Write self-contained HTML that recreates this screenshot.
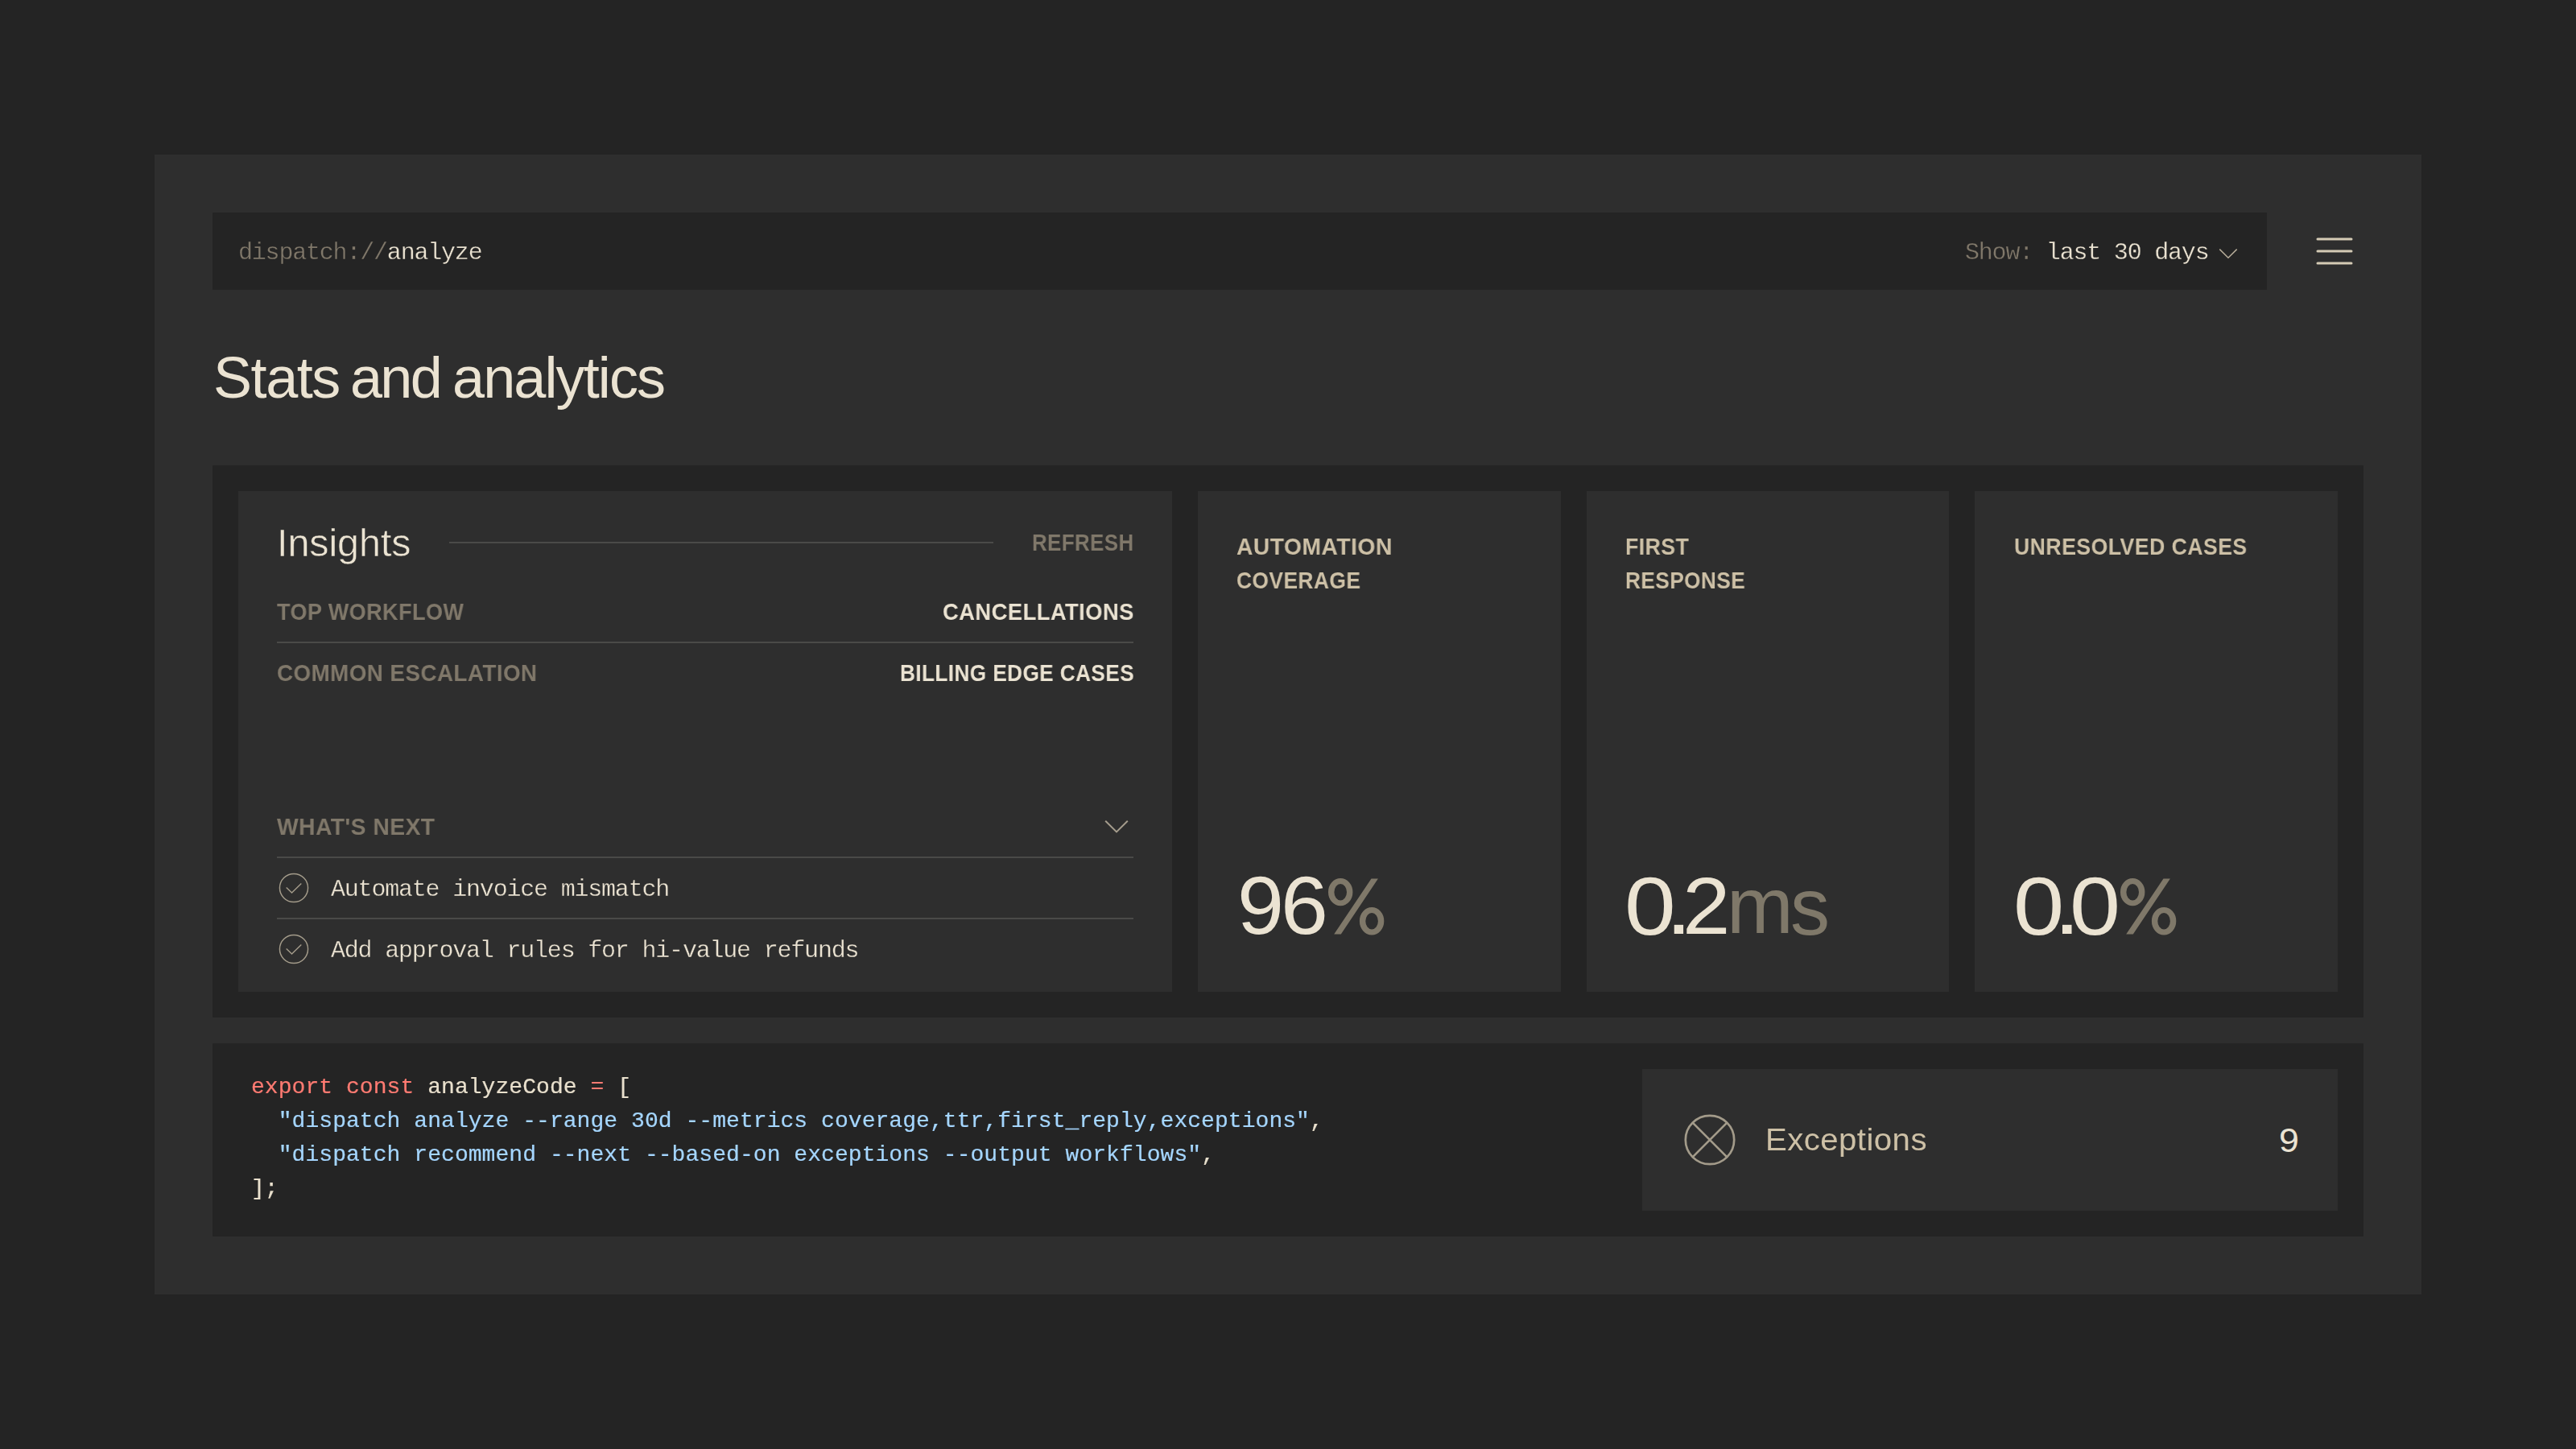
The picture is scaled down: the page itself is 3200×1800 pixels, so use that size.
<!DOCTYPE html>
<html lang="en">
<head>
<meta charset="utf-8">
<title>Stats and analytics</title>
<style>
*{box-sizing:border-box;margin:0;padding:0}
html,body{width:3200px;height:1800px;background:#242424;overflow:hidden}
body{position:relative;font-family:"Liberation Sans",sans-serif;color:#ebe3d2;-webkit-font-smoothing:antialiased}
.abs{position:absolute}
.t{position:absolute;white-space:nowrap;line-height:1;will-change:transform;transform-origin:0 0}
.mono{font-family:"Liberation Mono",monospace;font-size:30px;letter-spacing:-1.2px}
.code{font-family:"Liberation Mono",monospace;font-size:28px}
.shell{left:192px;top:192px;width:2816px;height:1416px;background:#2e2e2e}
.dark{background:#242424}
.card{background:#2e2e2e}
.lbl{font-weight:700;font-size:29.5px;letter-spacing:0}
.muted{color:#80786a}
.beige{color:#cdc0a6}
.cream{color:#ebe3d2}
.hr{position:absolute;height:2px;background:#4a4a48}
.big{font-size:96px;letter-spacing:-4px}
.g{position:absolute;font-size:96px;line-height:1;white-space:nowrap;transform-origin:0 0}
</style>
</head>
<body>
<div class="abs shell"></div>

<!-- top bar -->
<div class="abs dark" style="left:264px;top:264px;width:2552px;height:96px"></div>
<div class="t mono" id="url" style="left:295.6px;top:299.2px;-webkit-text-stroke:0.3px #242424"><span class="muted">dispatch://</span><span class="cream">analyze</span></div>
<div class="t mono" id="show" style="left:2441px;top:299px;-webkit-text-stroke:0.3px #242424"><span class="muted">Show: </span><span class="cream">last 30 days</span></div>
<svg class="abs" id="chev1" style="left:2750px;top:300px" width="40" height="30" viewBox="0 0 40 30"><path d="M7.3 9.6 L18 20.2 L28.7 9.6" fill="none" stroke="#b5ab98" stroke-width="1.5"/></svg>
<!-- hamburger -->
<svg class="abs" id="ham" style="left:2870px;top:288px" width="60" height="48" viewBox="0 0 60 48"><path d="M9 9 H51 M9 24 H51 M9 39 H51" fill="none" stroke="#d5cbb5" stroke-width="3" stroke-linecap="round"/></svg>

<!-- title -->
<div class="t cream" id="t1" style="left:264.6px;top:432.6px;font-size:72px;letter-spacing:-1.45px">Stats</div>
<div class="t cream" id="t2" style="left:434.6px;top:432.6px;font-size:72px;letter-spacing:-2.70px">and</div>
<div class="t cream" id="t3" style="left:561.8px;top:432.6px;font-size:72px;letter-spacing:-1.88px">analytics</div>

<!-- main panel -->
<div class="abs dark" style="left:264px;top:578px;width:2672px;height:686px"></div>
<div class="abs card" style="left:296px;top:610px;width:1160px;height:622px"></div>
<div class="abs card" style="left:1488px;top:610px;width:451px;height:622px"></div>
<div class="abs card" style="left:1971px;top:610px;width:450px;height:622px"></div>
<div class="abs card" style="left:2453px;top:610px;width:451px;height:622px"></div>

<!-- insights -->
<div class="t cream" id="ins" style="left:343.8px;top:650.2px;font-size:48.5px;letter-spacing:-0.09px;-webkit-text-stroke:0.5px #2e2e2e">Insights</div>
<div class="hr" style="left:558px;top:673px;width:676px"></div>
<div class="t lbl muted" id="refresh" style="left:1281.8px;top:659.0px;letter-spacing:0.50px;transform:scaleX(0.8757)">REFRESH</div>

<div class="t lbl muted" id="tw" style="left:344.2px;top:744.8px;letter-spacing:0.50px;transform:scaleX(0.9145)">TOP WORKFLOW</div>
<div class="t lbl cream" id="canc" style="left:1170.5px;top:745.0px;letter-spacing:0.50px;transform:scaleX(0.9265)">CANCELLATIONS</div>
<div class="hr" style="left:344px;top:797px;width:1064px"></div>
<div class="t lbl muted" id="ce" style="left:344.2px;top:821.0px;letter-spacing:0.50px;transform:scaleX(0.9407)">COMMON ESCALATION</div>
<div class="t lbl cream" id="bec" style="left:1117.6px;top:821.0px;letter-spacing:0.50px;transform:scaleX(0.8856)">BILLING EDGE CASES</div>

<div class="t lbl muted" id="wn" style="left:344.2px;top:1011.8px;letter-spacing:0.50px;transform:scaleX(0.9570)">WHAT'S NEXT</div>
<svg class="abs" id="chev2" style="left:1366px;top:1010px" width="44" height="34" viewBox="0 0 44 34"><path d="M7.2 9.7 L21 23.4 L34.8 9.7" fill="none" stroke="#a69e8e" stroke-width="2"/></svg>
<div class="hr" style="left:344px;top:1064px;width:1064px"></div>

<svg class="abs" id="chk1" style="left:344px;top:1082px" width="42" height="42" viewBox="0 0 42 42"><circle cx="21" cy="21" r="17.55" fill="none" stroke="#a39b8a" stroke-width="1.45"/><path d="M11.7 20.4 L18.5 26.9 L30.3 15.4" fill="none" stroke="#a39b8a" stroke-width="1.45"/></svg>
<div class="t mono cream" id="a1" style="left:411px;top:1090.1px;-webkit-text-stroke:0.3px #2e2e2e">Automate invoice mismatch</div>
<div class="hr" style="left:344px;top:1140px;width:1064px"></div>
<svg class="abs" id="chk2" style="left:344px;top:1158px" width="42" height="42" viewBox="0 0 42 42"><circle cx="21" cy="21" r="17.55" fill="none" stroke="#a39b8a" stroke-width="1.45"/><path d="M11.7 20.4 L18.5 26.9 L30.3 15.4" fill="none" stroke="#a39b8a" stroke-width="1.45"/></svg>
<div class="t mono cream" id="a2" style="left:411px;top:1166px;-webkit-text-stroke:0.3px #2e2e2e">Add approval rules for hi-value refunds</div>

<!-- stat cards -->
<div class="t lbl beige" id="s1a" style="left:1536.0px;top:664.0px;letter-spacing:0.50px;transform:scaleX(0.9581)">AUTOMATION</div>
<div class="t lbl beige" id="s1b" style="left:1536.0px;top:706.0px;letter-spacing:0.50px;transform:scaleX(0.8928)">COVERAGE</div>
<div class="t lbl beige" id="s2a" style="left:2018.8px;top:664.0px;letter-spacing:0.50px;transform:scaleX(0.9032)">FIRST</div>
<div class="t lbl beige" id="s2b" style="left:2018.8px;top:706.0px;letter-spacing:0.50px;transform:scaleX(0.8883)">RESPONSE</div>
<div class="t lbl beige" id="s3a" style="left:2501.8px;top:664.0px;letter-spacing:0.50px;transform:scaleX(0.9036)">UNRESOLVED CASES</div>


<!--BIG-->
<div class="g" style="left:1536.71px;top:1074.33px;transform:scale(1.0870,1.0647);color:#ebe3d2">9</div>
<div class="g" style="left:1590.96px;top:1074.33px;transform:scale(1.1034,1.0647);color:#ebe3d2">6</div>
<svg class="abs" style="left:1650.0px;top:1090.7px" width="70" height="71" viewBox="0 0 70 71"><path d="M0.00 17.15a15.20 17.15 0 1 0 30.40 0a15.20 17.15 0 1 0 -30.40 0ZM7.40 17.15a7.80 10.25 0 1 0 15.60 0a7.80 10.25 0 1 0 -15.60 0ZM38.90 53.25a15.20 17.15 0 1 0 30.40 0a15.20 17.15 0 1 0 -30.40 0ZM46.30 53.25a7.80 10.25 0 1 0 15.60 0a7.80 10.25 0 1 0 -15.60 0ZM53.5 0.5H61.9L15.8 69.5H7.2Z" fill="#7f7869" fill-rule="evenodd"/></svg>
<div class="g" style="left:2018.42px;top:1074.55px;transform:scale(1.1935,1.0632);color:#ebe3d2">0</div>
<div class="g" style="left:2068.82px;top:1072.80px;transform:scale(1.2324,1.0732);color:#ebe3d2">.</div>
<div class="g" style="left:2090.41px;top:1074.75px;transform:scale(1.1131,1.0493);color:#ebe3d2">2</div>
<div class="g" style="left:2144.97px;top:1077.42px;transform:scale(1.0349,1.0164);color:#7f7869">m</div>
<div class="g" style="left:2223.69px;top:1075.75px;transform:scale(1.0228,1.0438);color:#7f7869">s</div>
<div class="g" style="left:2501.46px;top:1074.55px;transform:scale(1.1848,1.0632);color:#ebe3d2">0</div>
<div class="g" style="left:2551.13px;top:1072.80px;transform:scale(1.2541,1.0732);color:#ebe3d2">.</div>
<div class="g" style="left:2570.87px;top:1074.55px;transform:scale(1.1804,1.0632);color:#ebe3d2">0</div>
<svg class="abs" style="left:2633.7px;top:1090.7px" width="70" height="71" viewBox="0 0 70 71"><path d="M0.00 17.15a15.20 17.15 0 1 0 30.40 0a15.20 17.15 0 1 0 -30.40 0ZM7.40 17.15a7.80 10.25 0 1 0 15.60 0a7.80 10.25 0 1 0 -15.60 0ZM38.90 53.25a15.20 17.15 0 1 0 30.40 0a15.20 17.15 0 1 0 -30.40 0ZM46.30 53.25a7.80 10.25 0 1 0 15.60 0a7.80 10.25 0 1 0 -15.60 0ZM53.5 0.5H61.9L15.8 69.5H7.2Z" fill="#7f7869" fill-rule="evenodd"/></svg>
<!--/BIG-->

<!-- code panel -->
<div class="abs dark" style="left:264px;top:1296px;width:2672px;height:240px"></div>
<pre class="abs code" id="code" style="will-change:transform;-webkit-text-stroke:0.2px;left:311.7px;top:1329.5px;line-height:42px;letter-spacing:0.056px;color:#e9e0cd"><span style="color:#ff7b72">export</span> <span style="color:#ff7b72">const</span> analyzeCode <span style="color:#ff7b72">=</span> [
  <span style="color:#a5d6ff">"dispatch analyze --range 30d --metrics coverage,ttr,first_reply,exceptions"</span>,
  <span style="color:#a5d6ff">"dispatch recommend --next --based-on exceptions --output workflows"</span>,
];</pre>

<!-- exceptions -->
<div class="abs card" style="left:2040px;top:1328px;width:864px;height:176px"></div>
<svg class="abs" id="xic" style="left:2088px;top:1380px" width="72" height="72" viewBox="0 0 72 72"><circle cx="36" cy="36" r="30.2" fill="none" stroke="#a39b8a" stroke-width="2.7"/><path d="M14.65 14.65 L57.35 57.35 M57.35 14.65 L14.65 57.35" fill="none" stroke="#a39b8a" stroke-width="2.7"/></svg>
<div class="t beige" id="exc" style="left:2192.6px;top:1397.0px;font-size:38.5px;letter-spacing:0.40px;transform:scaleX(1.0446)">Exceptions</div>
<!--NINE--><div class="g" style="font-size:40px;left:2830.94px;top:1394.10px;transform:scale(1.1200,1.0832);color:#ebe3d2">9</div><!--/NINE-->
<script>(function(){var w=window.innerWidth;if(w&&Math.abs(w-3200)>1){document.documentElement.style.zoom=w/3200;}})();</script>
</body>
</html>
